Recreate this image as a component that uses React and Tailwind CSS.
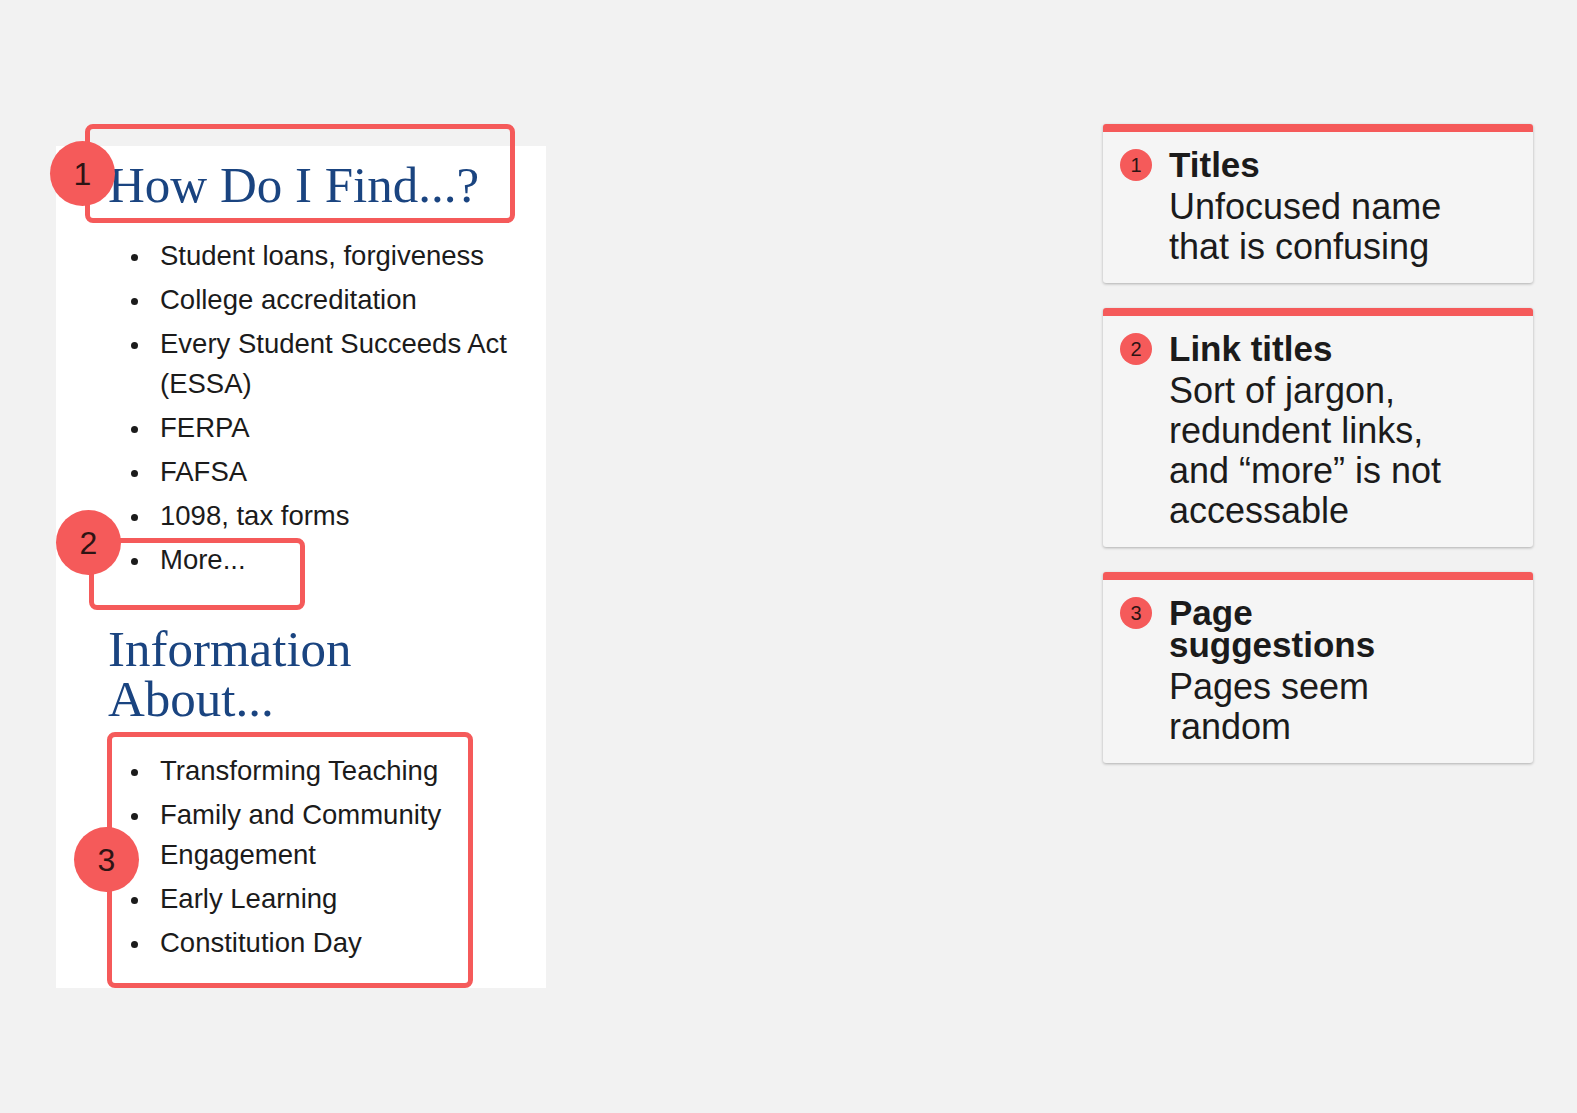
const findLinks = [
    'Student loans, forgiveness',
    'College accreditation',
    'Every Student Succeeds Act (ESSA)',
    'FERPA',
    'FAFSA',
    '1098, tax forms',
    'More...',
]

const aboutLinks = [
    'Transforming Teaching',
    'Family and Community Engagement',
    'Early Learning',
    'Constitution Day',
]

const notes = [
    { n: 1, title: 'Titles', body: 'Unfocused name that is confusing' },
    { n: 2, title: 'Link titles', body: 'Sort of jargon, redundent links, and \u201Cmore\u201D is not accessable' },
    { n: 3, title: 'Page suggestions', body: 'Pages seem random' },
]

function LinkList({ items, className }) {
    return (
        <ul className={`flex flex-col gap-[4px] text-[27.5px] leading-[40px] text-[#1b1b1b] ${className}`}>
            {items.map((item) => (
                <li key={item} className="flex">
                    <span className="w-[52px] h-[40px] flex items-center justify-center pt-[3px] shrink-0">
                        <span className="w-[7px] h-[7px] rounded-full bg-[#1b1b1b]" />
                    </span>
                    <span className="flex-1">{item}</span>
                </li>
            ))}
        </ul>
    )
}

function Marker({ n, className }) {
    return (
        <div className={`absolute w-[65px] h-[65px] rounded-full bg-[#f55a5a] flex items-center justify-center text-[32px] text-[#2e1414] ${className}`}>
            {n}
        </div>
    )
}

export default function App() {
    return (
        <div
            className="relative min-h-screen bg-[#f2f2f2] flex justify-between pl-[56px] pr-[44px]"
            style={{ fontFamily: '"Liberation Sans", Arial, sans-serif' }}
        >
            {/* Left: page excerpt */}
            <div className="w-[490px] h-[842px] mt-[146px] bg-white pl-[52px] pt-[14px]">
                <h2 className="font-['Liberation_Serif',serif] text-[51px] leading-[50px] text-[#1a4480]">
                    How Do I Find...?
                </h2>
                <LinkList items={findLinks} className="mt-[26px]" />
                <h2 className="mt-[44px] w-[300px] font-['Liberation_Serif',serif] text-[51px] leading-[50px] text-[#1a4480]">
                    Information About...
                </h2>
                <LinkList items={aboutLinks} className="mt-[27px]" />
            </div>

            {/* Right: notes */}
            <div className="w-[430px] mt-[124px] flex flex-col gap-[25px]">
                {notes.map((note) => (
                    <div
                        key={note.n}
                        className="bg-[#f5f5f5] rounded-[3px] overflow-hidden shadow-[0_1px_3px_rgba(0,0,0,0.28)]"
                    >
                        <div className="h-[8px] bg-[#f55a5a]" />
                        <div className="flex pl-[17px] pt-[17px] pb-[16px]">
                            <div className="w-[32px] h-[32px] rounded-full bg-[#f55a5a] flex items-center justify-center text-[20px] text-[#2e1414] shrink-0">
                                {note.n}
                            </div>
                            <div className="ml-[17px] w-[290px] text-[#1b1b1b]">
                                <div className="text-[35px] leading-[32px] font-bold">{note.title}</div>
                                <div className="mt-[6px] text-[36px] leading-[40px]">{note.body}</div>
                            </div>
                        </div>
                    </div>
                ))}
            </div>

            {/* Annotation overlays */}
            <div className="absolute left-[85px] top-[124px] w-[430px] h-[99px] border-[5px] border-[#f55a5a] rounded-[8px]" />
            <div className="absolute left-[89px] top-[538px] w-[216px] h-[72px] border-[5px] border-[#f55a5a] rounded-[8px]" />
            <div className="absolute left-[107px] top-[732px] w-[366px] h-[256px] border-[5px] border-[#f55a5a] rounded-[8px]" />
            <Marker n={1} className="left-[50px] top-[141px]" />
            <Marker n={2} className="left-[56px] top-[510px]" />
            <Marker n={3} className="left-[74px] top-[827px]" />
        </div>
    )
}
